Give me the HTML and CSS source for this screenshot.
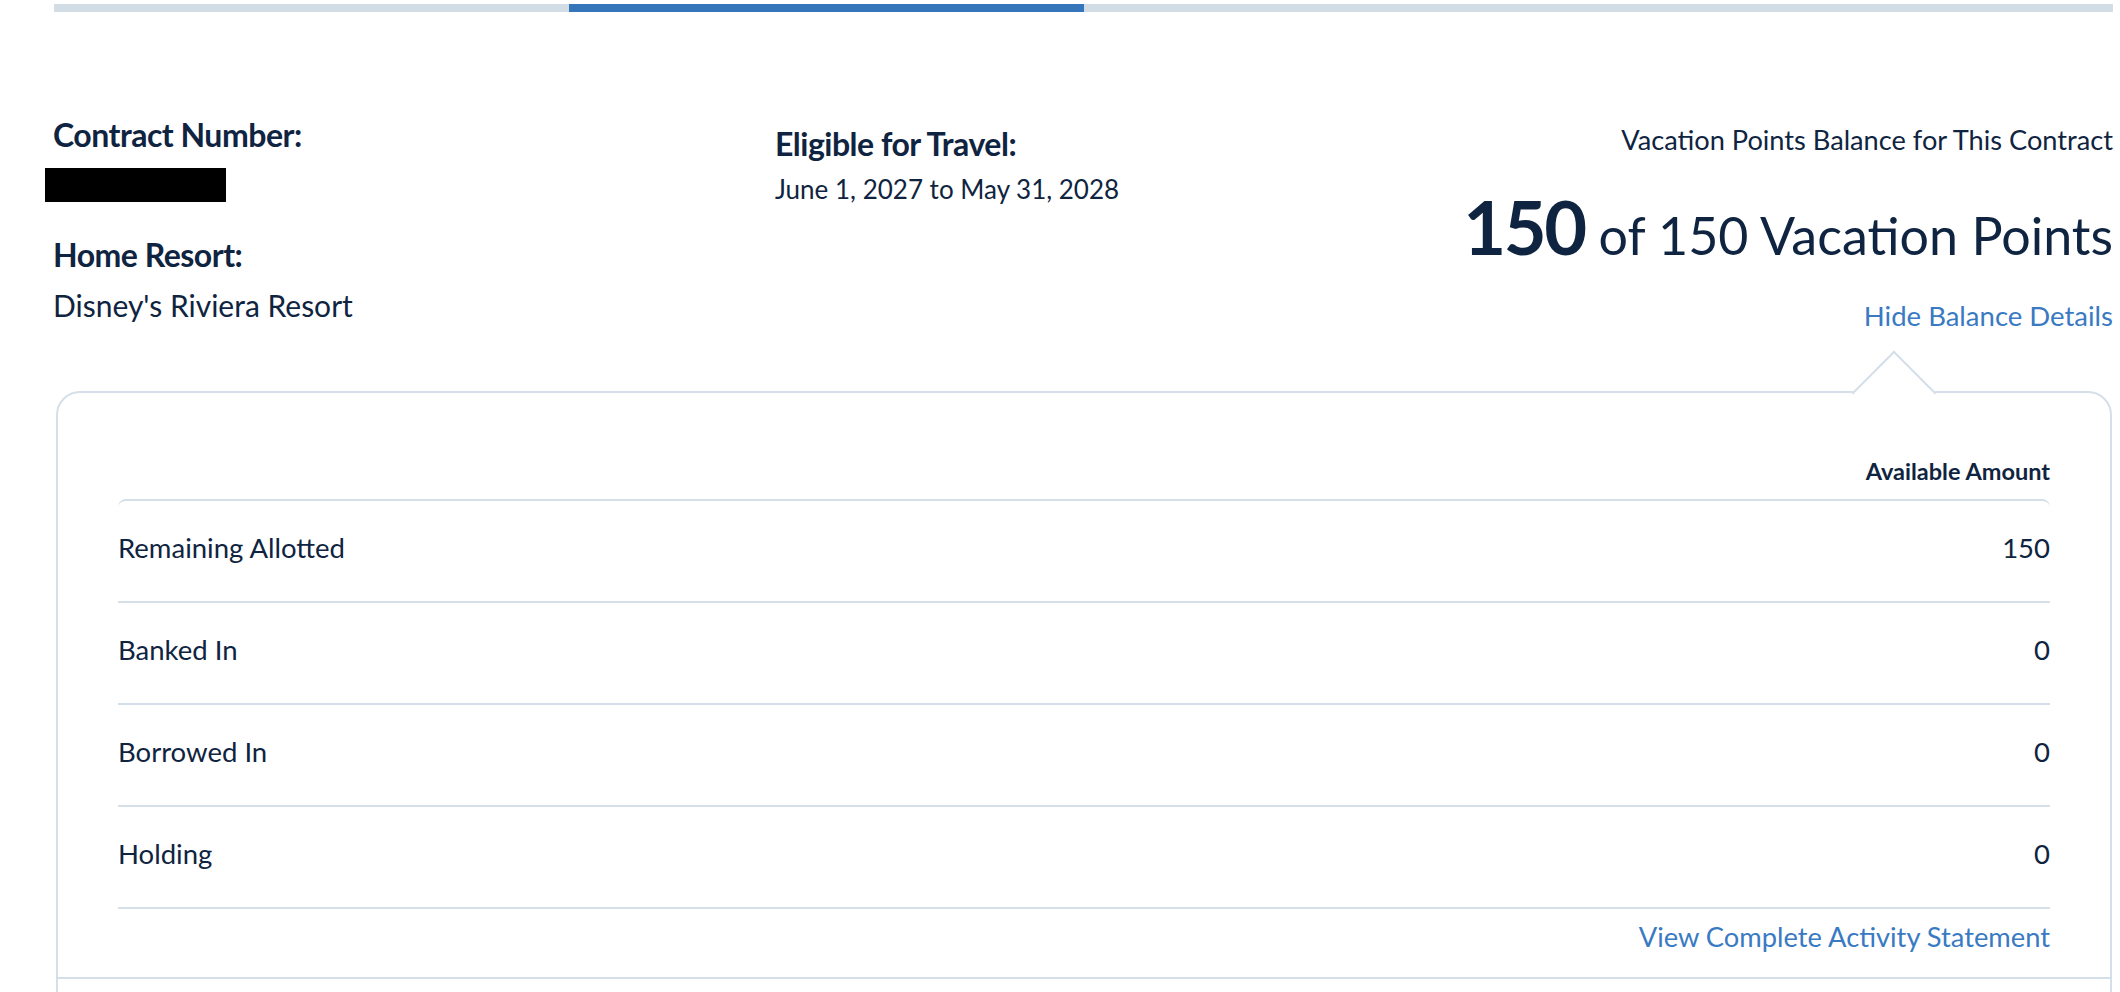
FILE: index.html
```html
<!DOCTYPE html>
<html lang="en">
<head>
<meta charset="utf-8">
<title>Contract Balance</title>
<link rel="stylesheet" href="styles.css">
</head>
<body>
<div class="page">
  <div class="progress">
    <span class="step"></span>
    <span class="step active"></span>
    <span class="step"></span>
    <span class="step"></span>
  </div>

  <section class="summary">
    <div class="col col-left">
      <h3 class="label first">Contract Number:</h3>
      <div class="redacted"></div>
      <h3 class="label home">Home Resort:</h3>
      <p class="value resort">Disney's Riviera Resort</p>
    </div>
    <div class="col col-mid">
      <h3 class="label travel">Eligible for Travel:</h3>
      <p class="value dates">June 1, 2027 to May 31, 2028</p>
    </div>
    <div class="col col-right">
      <p class="balance-label">Vacation Points Balance for This Contract</p>
      <p class="balance"><strong class="balance-num">150</strong><span class="balance-rest">of 150 Vacation Points</span></p>
      <a class="link toggle" href="#">Hide Balance Details</a>
    </div>
  </section>

  <section class="card">
    <div class="card-body">
      <div class="table-head">Available Amount</div>
      <div class="table">
        <div class="row"><span class="row-label">Remaining Allotted</span><span class="row-value">150</span></div>
        <div class="row"><span class="row-label">Banked In</span><span class="row-value">0</span></div>
        <div class="row"><span class="row-label">Borrowed In</span><span class="row-value">0</span></div>
        <div class="row"><span class="row-label">Holding</span><span class="row-value">0</span></div>
      </div>
      <div class="card-link"><a class="link" href="#">View Complete Activity Statement</a></div>
    </div>
    <div class="card-footer"></div>
  </section>
</div>
</body>
</html>
```

FILE: styles.css
```css
* { box-sizing: border-box; }

html, body {
  margin: 0;
  padding: 0;
  background: #ffffff;
}

body {
  font-family: Lato, "Noto Sans", "Liberation Sans", sans-serif;
  color: #0f2440;
  overflow: hidden;
}

.page {
  padding: 4px 7px 0 53px;
}

/* progress bar */
.progress {
  display: flex;
  height: 8px;
  margin-left: 1px;
}
.step {
  flex: 1;
  background: #d3dde6;
}
.step.active {
  background: #3576ba;
}

/* summary */
.summary {
  display: grid;
  grid-template-columns: 722px 1fr auto;
  margin-top: 102px;
  align-items: start;
}

.label {
  margin: 0;
  font-size: 32px;
  line-height: 40px;
  font-weight: 700;
  letter-spacing: -0.5px;
}
.label.first { margin-top: 1px; }
.label.home { margin-top: 33px; }
.label.travel { margin-top: 10px; }

.redacted {
  width: 181px;
  height: 34px;
  background: #000;
  margin: 13px 0 0 -8px;
}

.value {
  margin: 0;
  font-size: 30px;
  line-height: 36px;
  font-weight: 400;
}
.value.resort { margin-top: 12px; }
.value.dates { margin-top: 7px; font-size: 26px; }

.col-right {
  display: flex;
  flex-direction: column;
  align-items: flex-end;
  text-align: right;
}

.balance-label {
  margin: 8px 0 0;
  font-size: 27.2px;
  line-height: 36px;
}

.balance {
  margin: 31px 0 0;
  display: flex;
  align-items: baseline;
  gap: 14px;
}
.balance-num {
  font-size: 74px;
  line-height: 76px;
  font-weight: 700;
  letter-spacing: -2.5px;
}
.balance-rest {
  font-size: 52px;
  line-height: 52px;
  font-weight: 400;
}

.link {
  color: #3a7ac2;
  text-decoration: none;
}
.toggle {
  margin-top: 34px;
  font-size: 27.5px;
  line-height: 34px;
}

/* card */
.card {
  position: relative;
  margin: 58px 1px 0 3px;
  border: 2px solid #d5dfe9;
  border-radius: 24px;
  background: #fff;
}
.card::before {
  content: "";
  position: absolute;
  top: -30px;
  right: 186px;
  width: 58px;
  height: 58px;
  background: #fff;
  border-top: 2px solid #d5dfe9;
  border-left: 2px solid #d5dfe9;
  transform: rotate(45deg);
}

.card-body {
  position: relative;
  padding: 63px 60px 22px 60px;
}

.table-head {
  text-align: right;
  font-size: 23.5px;
  line-height: 30px;
  font-weight: 700;
  padding-bottom: 13px;
}

.table {
  border-top: 2px solid #d5dfe9;
  border-radius: 8px 8px 0 0;
}

.row {
  display: flex;
  justify-content: space-between;
  align-items: center;
  height: 102px;
  padding-bottom: 6px;
  border-bottom: 2px solid #d5dfe9;
  font-size: 27.5px;
  line-height: 36px;
}

.card-link {
  text-align: right;
  margin-top: 10px;
  font-size: 27.3px;
  line-height: 36px;
}

.card-footer {
  border-top: 2px solid #d5dfe9;
  height: 120px;
}
```
